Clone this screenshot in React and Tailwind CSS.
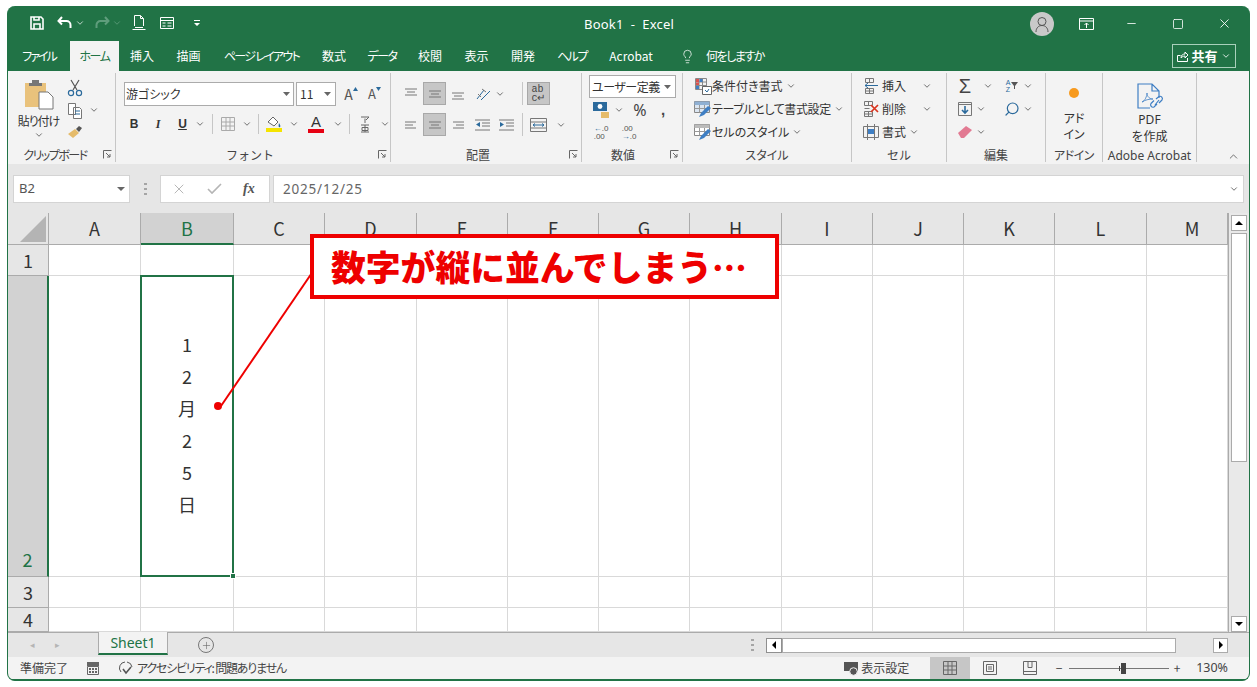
import { ChevronDown, ChevronUp, Lightbulb, Minus, Plus, Search, Square, X } from "lucide-react";

const palt = "[font-feature-settings:'palt']";

const tabs = [
  ["ファイル", "w-[62px] tracking-[-2px]"],
  ["ホーム", "w-[49px] bg-[#f3f3f3] text-[#217346] tracking-[-1.5px]"],
  ["挿入", "w-[46px]"],
  ["描画", "w-[47px]"],
  ["ページ レイアウト", "w-[99px] tracking-[-1.7px]"],
  ["数式", "w-[46px]"],
  ["データ", "w-[50px] tracking-[-1.5px]"],
  ["校閲", "w-[46px]"],
  ["表示", "w-[47px]"],
  ["開発", "w-[46px]"],
  ["ヘルプ", "w-[52px] tracking-[-1.5px]"],
  ["Acrobat", "w-[66px]"],
];

const cols = ["A", "B", "C", "D", "E", "F", "G", "H", "I", "J", "K", "L", "M"];

function Chev({ className = "" }) {
  return <ChevronDown size={10} strokeWidth={2} className={"text-[#555] shrink-0 " + className} />;
}

function Group({ width, label, launcher, children }) {
  return (
    <div className={"flex flex-col shrink-0 border-r border-[#c6c6c6] my-[2px] " + width}>
      <div className="h-[75px]">{children}</div>
      <div className="relative mt-[1px] h-[15px] text-center text-[12px] leading-[15px] text-[#444]">
        {label}
        {launcher && (
          <svg className="absolute right-[3px] top-[3px]" width="9" height="9" viewBox="0 0 9 9" fill="none" stroke="#666">
            <path d="M.5 8.500v-8h8M3 3l4 4M4 7h3V4" />
          </svg>
        )}
      </div>
    </div>
  );
}

function AlignIcon({ mode = "center", top = 0 }) {
  const lines = mode === "left" ? ["M2 5h11", "M2 8h8", "M2 11h11"] : mode === "right" ? ["M3 5h11", "M6 8h8", "M3 11h11"] : ["M2 5h12", "M4 8h8", "M2 11h12"];
  return (
    <svg width="16" height="16" viewBox="0 0 16 16" fill="none" stroke="#777" style={{ marginTop: top }}>
      {lines.map((d) => <path key={d} d={d} />)}
    </svg>
  );
}

function Slot({ w = "w-[24px]", active, className = "", children }) {
  return (
    <div className={"flex h-[23px] items-center justify-center shrink-0 " + w + (active ? " bg-[#c6c6c6] border border-[#a8a8a8] " : " ") + className}>
      {children}
    </div>
  );
}

function SmallTable({ color = "#555", children }) {
  return (
    <svg width="18" height="18" viewBox="0 0 18 18" fill="none" stroke={color} className="shrink-0">
      <path d="M2.500 2.500h13v13h-13zM2.500 7h13M2.500 11h13M7 2.500v13M11 2.500v13" />
      {children}
    </svg>
  );
}

function TitleBar() {
  return (
    <div className="flex h-[35px] items-center text-white">
      <div className="mb-[2px] flex w-[576px] items-center pl-[21px]">
        <svg width="16" height="16" viewBox="0 0 16 16" fill="none" stroke="#fff" strokeWidth="1.600">
          <path d="M2 2h10l2 2v10H2zM5 14V9h6v5M5 2v3h5V2" />
        </svg>
        <svg className="ml-[12px]" width="16" height="14" viewBox="0 0 16 14" fill="none" stroke="#fff" strokeWidth="2">
          <path d="M5 1 1.500 5 5 8.500M2 5h7.500a4 4 0 0 1 4 4v3" />
        </svg>
        <Chev className="ml-[2px] !text-[#dce8e1]" />
        <svg className="ml-[9px]" width="16" height="14" viewBox="0 0 16 14" fill="none" stroke="#5f9d7c" strokeWidth="2">
          <path d="M11 1l3.500 4L11 8.500M14 5H6.500a4 4 0 0 0-4 4v3" />
        </svg>
        <Chev className="ml-[2px] !text-[#5f9d7c]" />
        <svg className="ml-[9px]" width="16" height="17" viewBox="0 0 16 17" fill="none" stroke="#fff">
          <path d="M3.500 12V1.500h6l3 3V12M9.500 1.500v3h3M1.500 15.500h13M4 13.500h8" />
        </svg>
        <svg className="ml-[12px]" width="16" height="14" viewBox="0 0 16 14" fill="none" stroke="#fff">
          <path d="M1.500 1.500h13v11h-13zM1.500 4.500h13M3.500 7h3M3.500 10h3M8.500 7h4M8.500 10h4" />
        </svg>
        <svg className="ml-[19px]" width="6" height="8" viewBox="0 0 6 8" fill="#fff">
          <path d="M0 1h6v1H0zM0 4h6L3 7z" />
        </svg>
      </div>
      <div className="mt-[3px] w-[90px] whitespace-pre text-center font-['Noto_Sans'] text-[13px] tracking-[0.2px]">Book1  -  Excel</div>
      <div className="flex flex-1 items-center">
        <div className="ml-[356px] flex h-[24px] w-[24px] items-center justify-center rounded-full bg-[#c9c9c9]">
          <svg width="18" height="18" viewBox="0 0 18 18" fill="none" stroke="#555">
            <circle cx="9" cy="6.500" r="4" />
            <path d="M3 17c0-4 2.500-6.500 6-6.500s6 2.500 6 6.500" />
          </svg>
        </div>
        <svg className="ml-[25px]" width="15" height="12" viewBox="0 0 15 12" fill="none" stroke="#fff">
          <path d="M.5.5h14v11H.5zM.5 3h14M7.500 10V5M5.500 7l2-2 2 2" />
        </svg>
        <Minus size={13} className="ml-[31px]" strokeWidth={1.5} />
        <Square size={12} className="ml-[34px]" strokeWidth={1.6} />
        <X size={15} className="ml-[33px]" strokeWidth={1.4} />
      </div>
    </div>
  );
}

function TabBar() {
  return (
    <div className="flex h-[30px] items-end text-[12px] text-white">
      <div className="flex h-[30px] items-center">
        {tabs.map(([name, cls]) => (
          <div key={name} className={"flex h-full items-center justify-center whitespace-nowrap " + palt + " " + cls}>
            {name}
          </div>
        ))}
      </div>
      <div className="flex h-[30px] items-center">
        <Lightbulb size={15} strokeWidth={1.2} className="ml-[16px]" />
        <span className={"ml-[11px] whitespace-nowrap tracking-[-1.5px] " + palt}>何をしますか</span>
      </div>
      <div className="mb-[3px] ml-auto mr-[13px] flex h-[24px] w-[64px] items-center justify-center gap-[3px] border border-[#a9d0bb] text-[13px] font-bold">
        <svg width="11" height="11" viewBox="0 0 11 11" fill="none" stroke="#fff">
          <path d="M.5 10.500V4.500h3M.5 10.500h10V7M4 7c0-3 2-4 4-4V1l3 3-3 3V5C6 5 5 6 4 7z" />
        </svg>
        <span>共有</span>
        <Chev className="!text-white" />
      </div>
    </div>
  );
}

function ClipboardGroup() {
  return (
    <Group width="w-[108px]" label={<span className={"mr-[13px] tracking-[-1.5px] " + palt}>クリップボード</span>} launcher>
      <div className="flex pt-[6px]">
        <div className="flex w-[56px] flex-col items-center">
          <svg className="ml-[5px]" width="30" height="31" viewBox="0 0 30 31">
            <path d="M1 4h21v24H1z" fill="#e9c27c" />
            <path d="M8 1h7v3h3v3H5V4h3z" fill="#777" />
            <path d="M15 13h9l5 5v12H15z" fill="#fff" stroke="#777" />
          </svg>
          <div className={"ml-[5px] mt-[3px] text-[12px] leading-[15px] tracking-[-1px] text-[#333] " + palt}>貼り付け</div>
          <Chev className="ml-[5px] mt-[2px]" />
        </div>
        <div className="flex w-[22px] flex-col items-center gap-[5px]">
          <svg width="16" height="18" viewBox="0 0 16 18" fill="none" stroke="#555" strokeWidth="1.200">
            <path d="M4 1l6 10M12 1 6 11" />
            <circle cx="4" cy="14" r="2.600" stroke="#2b6a9c" />
            <circle cx="12" cy="14" r="2.600" stroke="#2b6a9c" />
          </svg>
          <svg width="16" height="18" viewBox="0 0 16 18" fill="#fff" stroke="#777">
            <path d="M1.500 1.500h7v11h-7zM6.500 5.500h6l2 2v9h-8z" />
            <path d="M8 9h5M8 12h5" stroke="#2b6a9c" />
          </svg>
          <svg width="16" height="14" viewBox="0 0 16 14">
            <path d="M1 9 8 4l4 4-6 5z" fill="#e5bb6a" />
            <path d="M9 4l3-3 3 2-3 4z" fill="#555" />
          </svg>
        </div>
        <div className="flex w-[16px] items-start justify-center pt-[26px]"><Chev /></div>
      </div>
    </Group>
  );
}

function FontGroup() {
  return (
    <Group width="w-[275px]" label={<span className="mr-[6px]">フォント</span>} launcher>
      <div className="flex items-center pl-[8px] pt-[9px]">
        <div className={"flex h-[24px] w-[170px] items-center justify-between border border-[#ababab] bg-white pl-[1px] pr-[3px] text-[12px] text-[#333] " + palt}>
          游ゴシック
          <svg width="7" height="4" viewBox="0 0 7 4" fill="#666"><path d="M0 0h7L3.500 4z" /></svg>
        </div>
        <div className="ml-[2px] flex h-[24px] w-[40px] items-center justify-between border border-[#ababab] bg-white pl-[3px] pr-[4px] text-[12px] text-[#333]">
          11
          <svg width="7" height="4" viewBox="0 0 7 4" fill="#666"><path d="M0 0h7L3.500 4z" /></svg>
        </div>
        <div className="ml-[3px] flex w-[24px] items-start justify-center text-[14px] leading-[16px] text-[#555]">
          A
          <svg className="mt-[1px]" width="5" height="4" viewBox="0 0 5 4" fill="#2b6a9c"><path d="M0 4h5L2.500 0z" /></svg>
        </div>
        <div className="flex w-[23px] items-start justify-center text-[13px] leading-[16px] text-[#555]">
          A
          <svg className="mt-[1px]" width="5" height="4" viewBox="0 0 5 4" fill="#2b6a9c"><path d="M0 0h5L2.500 4z" /></svg>
        </div>
      </div>
      <div className="mt-[6px] flex items-center pl-[6px] text-[12px] text-[#333]">
        <Slot><b className="font-['Liberation_Sans']">B</b></Slot>
        <Slot><i className="font-['Liberation_Serif'] font-bold">I</i></Slot>
        <Slot w="w-[25px]"><u className="font-['Liberation_Sans'] font-bold">U</u></Slot>
        <Slot w="w-[10px]"><Chev /></Slot>
        <div className="ml-[7px] h-[20px] border-l border-[#c6c6c6]" />
        <Slot w="w-[29px]"><SmallTable color="#aaa" /></Slot>
        <Slot w="w-[10px]"><Chev /></Slot>
        <div className="ml-[6px] h-[20px] border-l border-[#c6c6c6]" />
        <Slot w="w-[30px]">
          <div className="flex flex-col items-center">
            <svg width="16" height="13" viewBox="0 0 16 13" fill="#fff" stroke="#666"><path d="M2 7l5-5 5 5-4 4z" /><path d="M13 8c1 2 2 3 1 4s-2 0-1-4z" fill="#2b6a9c" stroke="none" /></svg>
            <div className="h-[4px] w-[16px] bg-[#f5e400]" />
          </div>
        </Slot>
        <Slot w="w-[10px]"><Chev /></Slot>
        <Slot w="w-[34px]">
          <div className="flex flex-col items-center">
            <span className="font-['Liberation_Sans'] text-[15px] leading-[14px]">A</span>
            <div className="h-[4px] w-[16px] bg-[#e60012]" />
          </div>
        </Slot>
        <Slot w="w-[10px]"><Chev /></Slot>
        <div className="ml-[6px] h-[20px] border-l border-[#c6c6c6]" />
        <Slot w="w-[30px]">
          <svg width="10" height="18" viewBox="0 0 10 18" fill="none" stroke="#666"><path d="M1 2h8L6 5M5 3.500V8M1 10h8M2 12.500h6v3H2zM5 10v7M1 17h8" /></svg>
        </Slot>
        <Slot w="w-[10px]"><Chev /></Slot>
      </div>
    </Group>
  );
}

function AlignGroup() {
  return (
    <Group width="w-[191px]" label={<span className="mr-[16px]">配置</span>} launcher>
      <div className="flex pl-[8px] pt-[9px]">
        <Slot w="w-[23px]"><AlignIcon top={-4} /></Slot>
        <Slot w="w-[23px] ml-[1px]" active><AlignIcon /></Slot>
        <Slot w="w-[24px]"><AlignIcon top={4} /></Slot>
        <Slot w="w-[26px]">
          <svg width="18" height="16" viewBox="0 0 18 16" fill="none" stroke="#777"><path d="M3 13 10 4M7 14l9-9" stroke="#2b6a9c" /><path d="M4 8l3 3M8 3l4 3" /></svg>
        </Slot>
        <Slot w="w-[8px]"><Chev /></Slot>
        <div className="ml-[18px] h-[23px] border-l border-[#c6c6c6]" />
        <Slot w="w-[23px] ml-[4px]" active>
          <span className="font-['Liberation_Mono'] text-[10px] leading-[9px] text-[#444]">ab<br />c↵</span>
        </Slot>
      </div>
      <div className="mt-[8px] flex pl-[8px]">
        <Slot w="w-[23px]"><AlignIcon mode="left" /></Slot>
        <Slot w="w-[23px] ml-[1px]" active><AlignIcon /></Slot>
        <Slot w="w-[24px]"><AlignIcon mode="right" /></Slot>
        <Slot w="w-[24px]">
          <svg width="17" height="16" viewBox="0 0 17 16" fill="none" stroke="#777"><path d="M1 3h15M8 6h8M8 9h8M1 13h15" /><path d="M6 5 2 7.500 6 10z" fill="#2b6a9c" stroke="none" /></svg>
        </Slot>
        <Slot w="w-[24px]">
          <svg width="17" height="16" viewBox="0 0 17 16" fill="none" stroke="#777"><path d="M1 3h15M8 6h8M8 9h8M1 13h15" /><path d="M2 5l4 2.500L2 10z" fill="#2b6a9c" stroke="none" /></svg>
        </Slot>
        <div className="ml-[4px] h-[23px] border-l border-[#c6c6c6]" />
        <Slot w="w-[30px]">
          <svg width="17" height="16" viewBox="0 0 17 16" fill="none" stroke="#777"><path d="M.5 1.500h16v13H.5zM.5 5h16M.5 11h16" /><path d="M3 8h11M5 6.500 3 8l2 1.500M12 6.500 14 8l-2 1.500" stroke="#2b6a9c" /></svg>
        </Slot>
        <Slot w="w-[16px]"><Chev /></Slot>
      </div>
    </Group>
  );
}

function NumberGroup() {
  return (
    <Group width="w-[101px]" label={<span className="mr-[18px]">数値</span>} launcher>
      <div className="ml-[7px] mt-[2px] flex h-[23px] w-[87px] items-center justify-between border border-[#ababab] bg-white pl-[2px] pr-[4px] text-[12px] text-[#333]">
        <span className={"whitespace-nowrap tracking-[-0.5px] " + palt}>ユーザー定義</span>
        <svg width="7" height="4" viewBox="0 0 7 4" fill="#666"><path d="M0 0h7L3.500 4z" /></svg>
      </div>
      <div className="flex items-center pl-[8px]">
        <Slot w="w-[22px]">
          <svg width="18" height="18" viewBox="0 0 18 18"><path d="M1 1h14v9H1z" fill="#2b6a9c" /><circle cx="8" cy="5.500" r="2.400" fill="#fff" /><path d="M9 11h8v6H9z" fill="#e5bb6a" /></svg>
        </Slot>
        <Slot w="w-[14px]"><Chev /></Slot>
        <Slot w="w-[28px]"><span className="font-['Noto_Sans'] text-[16px] leading-none text-[#444]">%</span></Slot>
        <Slot w="w-[18px]"><span className="font-['Liberation_Sans'] text-[15px] font-bold leading-none text-[#444]">,</span></Slot>
      </div>
      <div className="flex items-center pl-[8px]">
        <Slot w="w-[22px]"><span className="font-['Liberation_Sans'] text-[8px] leading-[8px] text-[#555]"><span className="text-[#2b6a9c]">←</span>.0<br />.00</span></Slot>
        <Slot w="w-[6px]" />
        <Slot w="w-[22px]"><span className="font-['Liberation_Sans'] text-[8px] leading-[8px] text-[#555]">.00<br /><span className="text-[#2b6a9c]">→</span>.0</span></Slot>
      </div>
    </Group>
  );
}

function CondIcon() {
  return (
    <svg width="18" height="18" viewBox="0 0 18 18" fill="none" className="shrink-0">
      <path d="M1.500 1.500h11v11h-11zM1.500 5h11M1.500 8.500h11M5 1.500v11M8.500 1.500v11" stroke="#888" />
      <path d="M2 2h3v3H2zM2 5.500h3V8H2z" fill="#d9534f" />
      <path d="M5.500 2h3v3h-3zM2 9h3v3H2z" fill="#3f7fc4" />
      <path d="M8.500 9.500h9v8h-9z" fill="#fff" stroke="#666" />
      <path d="M11 13l2 2 2-3" stroke="#2b6a9c" />
    </svg>
  );
}

function TableFmtIcon({ dashed }) {
  return (
    <svg width="18" height="18" viewBox="0 0 18 18" fill="none" className="shrink-0">
      <path d="M.5 1.500h15v11H.5z" stroke="#888" fill={dashed ? "#fff" : "#dbe6f2"} />
      <path d="M.5 1.500h15V5H.5z" fill={dashed ? "#bbb" : "#8fb0d3"} />
      <path d="M.5 8.500h15M5.500 5v7.500M10.500 5v7.500" stroke="#999" />
      <path d="M5 17l2-4 7-7 3 2-7 7z" fill="#3f7fc4" />
    </svg>
  );
}

function StyleRow({ icon, label, tracking = "", chevGap = "ml-[3px]" }) {
  return (
    <div className="flex h-[23px] items-center pl-[11px] text-[12px] text-[#333]">
      {icon}
      <span className={"whitespace-nowrap " + palt + " " + tracking}>{label}</span>
      <Chev className={chevGap} />
    </div>
  );
}

function StyleGroup() {
  return (
    <Group width="w-[169px]" label={<span className={palt}>スタイル</span>}>
      <div className="pt-[1px]">
        <StyleRow icon={<CondIcon />} label="条件付き書式" />
        <StyleRow icon={<TableFmtIcon />} label="テーブルとして書式設定" tracking="tracking-[-0.4px]" />
        <StyleRow icon={<TableFmtIcon dashed />} label="セルのスタイル" />
      </div>
    </Group>
  );
}

function CellRow({ icon, label, chev = "ml-[16px]" }) {
  return (
    <div className="flex h-[23px] items-center pl-[10px] text-[12px] text-[#333]">
      {icon}
      <span className="ml-[2px]">{label}</span>
      <Chev className={chev} />
    </div>
  );
}

function CellsGroup() {
  return (
    <Group width="w-[95px]" label={<span>セル</span>}>
      <div className="pt-[1px]">
        <CellRow
          label="挿入"
          icon={
            <svg width="18" height="18" viewBox="0 0 18 18" fill="none" stroke="#777" className="shrink-0">
              <path d="M3.500 1.500h8v4h-8zM3.500 11.500h8v5h-8zM7.500 1.500v4M7.500 11.500v5M3.500 14h8" />
              <path d="M16 8.500H3M6 6 3 8.500 6 11" stroke="#2b6a9c" />
            </svg>
          }
        />
        <CellRow
          label="削除"
          icon={
            <svg width="18" height="18" viewBox="0 0 18 18" fill="none" stroke="#777" className="shrink-0">
              <path d="M2.500 1.500h8v4h-8zM2.500 11.500h8v5h-8zM6.500 1.500v4M6.500 11.500v5M2.500 14h8M2.500 8.500h5" />
              <path d="M9 5l7 7M16 5l-7 7" stroke="#d9341e" strokeWidth="1.700" />
            </svg>
          }
        />
        <CellRow
          label="書式"
          chev="ml-[3px]"
          icon={
            <svg width="18" height="18" viewBox="0 0 18 18" fill="none" stroke="#777" className="shrink-0">
              <path d="M1.500 3.500h15v11h-15zM5.500 1v16M12.500 1v16" />
              <path d="M6 6h6v5H6z" fill="#3f7fc4" stroke="none" />
            </svg>
          }
        />
      </div>
    </Group>
  );
}

function EditGroup() {
  return (
    <Group width="w-[99px]" label={<span>編集</span>}>
      <div className="pl-[8px] pt-[1px]">
        <div className="flex h-[23px] items-center">
          <span className="w-[20px] text-center font-['Liberation_Sans'] text-[20px] leading-[20px] text-[#444]">Σ</span>
          <Slot w="w-[26px]"><Chev /></Slot>
          <Slot w="w-[22px]">
            <span className="font-['Liberation_Sans'] text-[7px] leading-[7px] text-[#2b6a9c]">A<br />Z</span>
            <svg className="ml-[1px]" width="7" height="7" viewBox="0 0 7 7" fill="#555"><path d="M0 0h7L4 4v3H3V4z" /></svg>
          </Slot>
          <Slot w="w-[10px]"><Chev /></Slot>
        </div>
        <div className="flex h-[23px] items-center">
          <svg width="16" height="16" viewBox="0 0 16 16" className="ml-[2px]" fill="none" stroke="#777"><path d="M1.500 1.500h13v13h-13zM1.500 3.500h13" /><path d="M8 5v7M5 9l3 3 3-3" stroke="#2b6a9c" strokeWidth="1.600" /></svg>
          <Slot w="w-[16px]"><Chev /></Slot>
          <Search size={16} strokeWidth={1.8} className="ml-[15px] -scale-x-100 text-[#2b6a9c]" />
          <Chev className="ml-[3px]" />
        </div>
        <div className="flex h-[23px] items-center">
          <svg width="16" height="14" viewBox="0 0 16 14" className="ml-[2px]"><path d="M1 8l8-7 6 4-8 8H4z" fill="#e27a92" /></svg>
          <Slot w="w-[16px]"><Chev /></Slot>
        </div>
      </div>
    </Group>
  );
}

function AddinGroup() {
  return (
    <Group width="w-[57px]" label={<span className={"tracking-[-0.5px] " + palt}>アドイン</span>}>
      <div className="flex flex-col items-center pt-[15px]">
        <div className="h-[10px] w-[10px] rounded-full bg-[#f79a1e]" />
        <div className={"mt-[12px] text-center text-[12px] leading-[16px] text-[#333] " + palt}>アド<br />イン</div>
      </div>
    </Group>
  );
}

function AdobeGroup() {
  return (
    <Group width="w-[94px]" label={<span className="whitespace-nowrap font-['Noto_Sans']">Adobe Acrobat</span>}>
      <div className="flex flex-col items-center pt-[9px]">
        <svg width="28" height="29" viewBox="0 0 28 29" fill="none" stroke="#3f7fc4" strokeWidth="1.200">
          <path d="M14 26H2V2h14l7 7v7M16 2v7h7" />
          <path d="M6 20c3-1 5-6 5-9 0 4 3 6 6 6-4 0-8 1-11 3z" stroke="#3f7fc4" strokeWidth=".8" />
          <path d="M20 17l3-2.500a2.400 2.400 0 0 1 3 3.500l-3 3M21 22l-3 3a2.400 2.400 0 0 1-3-3.500l3-3M19 23l4-5" />
        </svg>
        <div className="text-center text-[12px] leading-[16px] text-[#333]"><span className="font-['Noto_Sans']">PDF</span><br />を作成</div>
      </div>
    </Group>
  );
}

function Ribbon() {
  return (
    <div className="relative flex h-[93px] bg-[#f3f3f3]">
      <ClipboardGroup />
      <FontGroup />
      <AlignGroup />
      <NumberGroup />
      <StyleGroup />
      <CellsGroup />
      <EditGroup />
      <AddinGroup />
      <AdobeGroup />
      <ChevronUp size={13} strokeWidth={1.5} className="absolute bottom-[1px] right-[9px] text-[#555]" />
    </div>
  );
}

function FormulaBar() {
  return (
    <div className="flex h-[49px] bg-[#e6e6e6] px-[5px] pt-[11px]">
      <div className="flex h-[28px] w-[117px] items-center justify-between border border-[#d4d4d4] bg-white pl-[5px] pr-[4px] font-['Noto_Sans'] text-[13px] text-[#555]">
        B2
        <svg width="8" height="4" viewBox="0 0 8 4" fill="#666"><path d="M0 0h8L4 4z" /></svg>
      </div>
      <div className="flex h-[28px] w-[30px] items-center justify-center">
        <svg width="3" height="12" viewBox="0 0 3 12" fill="#a5a5a5"><path d="M0 0h3v2H0zM0 5h3v2H0zM0 10h3v2H0z" /></svg>
      </div>
      <div className="flex h-[28px] w-[110px] items-center border border-[#d4d4d4] bg-white">
        <X size={16} strokeWidth={1.2} className="ml-[10px] text-[#a5a5a5]" />
        <svg className="ml-[20px]" width="15" height="12" viewBox="0 0 15 12" fill="none" stroke="#b5b5b5" strokeWidth="1.600"><path d="M1 6l4 4 9-9" /></svg>
        <span className="ml-[21px] font-['Liberation_Serif'] text-[14px] font-bold italic leading-none text-[#555]">fx</span>
      </div>
      <div className="ml-[3px] flex h-[28px] flex-1 items-center justify-between border border-[#d4d4d4] bg-white pl-[9px] pr-[4px] font-['Noto_Sans'] text-[13.5px] tracking-[0.8px] text-[#666]">
        2025/12/25
        <Chev />
      </div>
    </div>
  );
}

function Sheet() {
  return (
    <div className="relative flex h-[419px] overflow-hidden bg-white">
      <div className="w-[1220px] shrink-0">
        <div className="grid h-[419px] grid-cols-[41px_92px_93px_91px_92px_91px_91px_91px_92px_91px_91px_91px_92px_81px] grid-rows-[32px_31px_301px_31px_24px]">
          <div className="flex items-end justify-end border-b border-r border-[#ababab] bg-[#e6e6e6] pb-[2px] pr-[2px]">
            <div className="h-[26px] w-[26px] bg-[#b4b4b4] [clip-path:polygon(100%_0,100%_100%,0_100%)]" />
          </div>
          {cols.map((c) => (
            <div
              key={c}
              className={
                "flex items-center justify-center border-r text-[18px] " +
                (c === "M" ? "pl-[10px] " : "") +
                (c === "B"
                  ? "border-b-2 border-[#ababab] border-b-[#217346] bg-[#d2d2d2] text-[#217346]"
                  : "border-b border-[#ababab] bg-[#e6e6e6] text-[#333]")
              }
            >
              {c}
            </div>
          ))}
          <RowHeader n="1" />
          <Cells row={1} />
          <RowHeader n="2" selected />
          <Cells row={2} />
          <RowHeader n="3" />
          <Cells row={3} />
          <RowHeader n="4" />
          <Cells row={4} />
        </div>
      </div>
      <Scrollbar />
      <Callout />
    </div>
  );
}

function RowHeader({ n, selected }) {
  return (
    <div
      className={
        "flex justify-center border-b text-[18px] " +
        (selected
          ? "items-end border-b-[#ababab] border-r-2 border-r-[#217346] bg-[#d2d2d2] pb-[2px] leading-[30px] text-[#217346]"
          : "items-center border-r border-[#ababab] bg-[#e6e6e6] text-[#333]")
      }
    >
      {n}
    </div>
  );
}

function Cells({ row }) {
  return cols.map((c) =>
    row === 2 && c === "B" ? (
      <div key={c} className="relative -mt-px -ml-px flex flex-col items-center justify-center border-2 border-[#217346] pb-[4px] text-[18px] leading-[32px] text-[#333]">
        {["1", "2", "月", "2", "5", "日"].map((ch, i) => <span key={i}>{ch}</span>)}
        <div className="absolute -bottom-[4px] -right-[4px] h-[6px] w-[6px] border border-white bg-[#217346]" />
      </div>
    ) : (
      <div key={c} className="border-b border-r border-[#d9d9d9]" />
    )
  );
}

function Scrollbar() {
  return (
    <div className="flex w-[21px] shrink-0 flex-col items-center border-l border-[#ababab] bg-[#e9e9e9] pt-[2px]">
      <div className="flex h-[16px] w-[16px] items-center justify-center border border-[#ababab] bg-white">
        <svg width="8" height="4" viewBox="0 0 8 4"><path d="M0 4h8L4 0z" /></svg>
      </div>
      <div className="mt-[2px] h-[229px] w-[16px] border border-[#ababab] bg-white" />
      <div className="mt-auto flex h-[16px] w-[16px] items-center justify-center border border-[#ababab] bg-white">
        <svg width="8" height="4" viewBox="0 0 8 4"><path d="M0 0h8L4 4z" /></svg>
      </div>
    </div>
  );
}

function Callout() {
  return (
    <>
      <svg className="absolute left-[200px] top-[45px]" width="120" height="160" viewBox="0 0 120 160" fill="none">
        <path d="M110 6 13 148" stroke="#ee0000" strokeWidth="2" />
        <circle cx="10" cy="148" r="4" fill="#ee0000" />
      </svg>
      <div className="absolute left-[302px] top-[21px] flex h-[65px] w-[469px] items-center border-[4px] border-[#ee0000] bg-white pl-[17px] text-[34.8px] font-black text-[#ee0000]">
        数字が縦に並んでしまう…
      </div>
    </>
  );
}

function SheetTabs() {
  return (
    <div className="flex h-[25px] items-center border-t border-[#ababab] bg-[#e6e6e6]">
      <span className="ml-[22px] w-[25px] text-[9px] text-[#b5b5b5]">◂</span>
      <span className="w-[43px] text-[9px] text-[#b5b5b5]">▸</span>
      <div className="-mt-px flex h-[23px] w-[70px] items-center justify-center self-start border-x border-b-2 border-[#ababab] border-b-[#217346] bg-[#f3f3f3] font-['Noto_Sans'] text-[14px] text-[#217346]">
        Sheet1
      </div>
      <div className="ml-[30px] flex h-[16px] w-[16px] items-center justify-center rounded-full border border-[#777]">
        <Plus size={11} strokeWidth={1.3} className="text-[#666]" />
      </div>
      <svg className="ml-[537px]" width="3" height="12" viewBox="0 0 3 12" fill="#a5a5a5"><path d="M0 0h3v2H0zM0 5h3v2H0zM0 10h3v2H0z" /></svg>
      <div className="ml-[12px] flex h-[15px] w-[16px] items-center justify-center border border-[#8f8f8f] bg-white">
        <svg width="4" height="8" viewBox="0 0 4 8"><path d="M4 0v8L0 4z" /></svg>
      </div>
      <div className="h-[15px] w-[394px] border border-[#ababab] bg-white" />
      <div className="ml-[37px] flex h-[15px] w-[15px] items-center justify-center border border-[#ababab] bg-white">
        <svg width="4" height="8" viewBox="0 0 4 8"><path d="M0 0v8l4-4z" /></svg>
      </div>
    </div>
  );
}

function StatusBar() {
  return (
    <div className="flex h-[22px] items-center bg-[#f3f3f3] text-[12px] text-[#444]">
      <span className="ml-[12px] w-[66px]">準備完了</span>
      <svg width="14" height="13" viewBox="0 0 14 13" fill="#666"><path d="M1 0h12v4H1z" /><path d="M1.500 4.500h11v8h-11z" fill="none" stroke="#666" /><path d="M3 6h2v2H3zM6 6h2v2H6zM9 6h2v2H9zM3 9h2v2H3zM6 9h2v2H6zM9 9h2v2H9z" /></svg>
      <svg className="ml-[19px]" width="14" height="14" viewBox="0 0 14 14" fill="none" stroke="#555"><path d="M2 11A6 6 0 0 1 6 1M8 1a6 6 0 0 1 5 5" /><path d="M4 8l3 4 5-6" strokeWidth="1.600" /></svg>
      <span className={"ml-[4px] whitespace-nowrap tracking-[-1.2px] " + palt}>アクセシビリティ: 問題ありません</span>
      <div className="ml-auto flex h-full items-center">
        <svg width="15" height="15" viewBox="0 0 15 15"><path d="M0 1h14v9H0z" fill="#555" /><circle cx="9.500" cy="10.500" r="3.800" fill="#555" stroke="#f3f3f3" /></svg>
        <span className="ml-[2px] w-[69px] whitespace-nowrap">表示設定</span>
        <div className="flex h-full w-[40px] items-center justify-center bg-[#c6c6c6]">
          <SmallTable color="#666" />
        </div>
        <div className="flex w-[40px] justify-center">
          <svg width="14" height="14" viewBox="0 0 14 14" fill="none" stroke="#666"><path d="M.5.5h13v13H.5zM3.500 3.500h7v7h-7zM5 6h4M5 8h4" /></svg>
        </div>
        <div className="flex w-[40px] justify-center">
          <svg width="14" height="14" viewBox="0 0 14 14" fill="none" stroke="#666"><path d="M.5.5h13v13H.5zM.5 10.500h13M5 .5v6h4v-6" /></svg>
        </div>
        <span className="ml-[5px] w-[8px] text-center">−</span>
        <div className="relative ml-[6px] h-px w-[100px] bg-[#777]">
          <div className="absolute left-[52px] -top-[5px] h-[11px] w-[5px] bg-[#444]" />
          <div className="absolute left-[50px] -top-[2px] h-[5px] w-px bg-[#444]" />
        </div>
        <span className="ml-[4px] w-[8px] text-center">+</span>
        <span className="ml-[15px] mr-[21px] font-['Noto_Sans'] text-[12.5px]">130%</span>
      </div>
    </div>
  );
}

export default function App() {
  return (
    <div className="h-[687px] w-[1257px] overflow-hidden bg-white pl-[7px] pt-[6px] font-['Noto_Sans_CJK_JP','Noto_Sans',sans-serif]">
      <div className="h-[675px] w-[1243px] overflow-hidden rounded-[8px] border-x border-b border-[#217346] bg-[#217346]">
        <TitleBar />
        <TabBar />
        <Ribbon />
        <FormulaBar />
        <Sheet />
        <SheetTabs />
        <StatusBar />
      </div>
    </div>
  );
}
